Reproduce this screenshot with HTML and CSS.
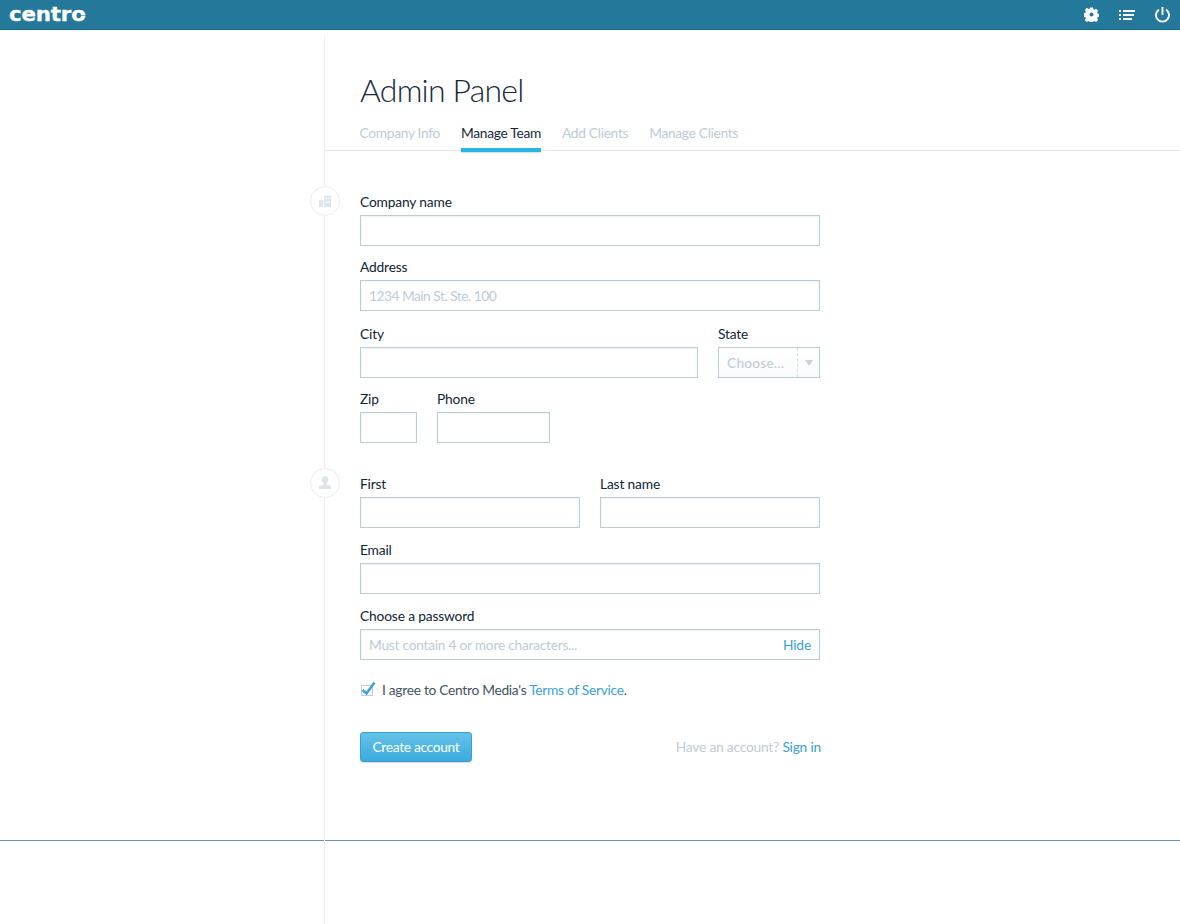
FILE: index.html
```html
<!DOCTYPE html>
<html lang="en">

<head>
    <meta charset="UTF-8" />
    <title>Admin Panel</title>
    <link rel="stylesheet" href="styles.css">
</head>

<body>

    <header class="topbar">
        <span class="logo">centro</span>
        <nav class="top-icons">
            <svg class="top-icon" width="15" height="15" viewBox="0 0 16 16">
                <path fill="#fff" fill-rule="evenodd" d="M6.400.5h3.200l.4 2 1.200.5 1.700-1.100 2.200 2.200-1.100 1.700.5 1.200 2 .4v3.200l-2 .4-.5 1.200 1.100 1.700-2.200 2.200-1.700-1.100-1.200.5-.4 2H6.400l-.4-2-1.200-.5-1.700 1.100-2.200-2.200 1.100-1.700-.5-1.200-2-.4V6.400l2-.4.5-1.200-1.100-1.700 2.200-2.200 1.700 1.100 1.200-.5zM8 5.800a2.200 2.200 0 1 0 0 4.400 2.200 2.200 0 0 0 0-4.400z" />
            </svg>
            <svg class="top-icon" width="16" height="12" viewBox="0 0 16 12">
                <path fill="#fff" d="M0 1h2v2H0zM4 1h12v2H4zM0 5h2v2H0zM4 5h11v2H4zM0 9h2v2H0zM4 9h9v2H4z" />
            </svg>
            <svg class="top-icon" width="15" height="16" viewBox="0 0 15 16">
                <path fill="none" stroke="#fff" stroke-width="1.900" d="M7.500 0v8M4 2.600a6.500 6.500 0 1 0 7 0" />
            </svg>
        </nav>
    </header>

    <main class="panel">
        <div class="panel-head">
            <h1>Admin Panel</h1>
            <ul class="tabs">
                <li>Company Info</li>
                <li class="active">Manage Team</li>
                <li>Add Clients</li>
                <li>Manage Clients</li>
            </ul>
        </div>

        <form class="signup">
            <section class="group">
                <span class="marker">
                    <svg width="12" height="12" viewBox="0 0 14 14">
                        <path fill="#dbe5ea" d="M0 6h5v8H0zM6 1h8v13H6z" />
                        <path fill="#fff" d="M8 3h1.500v2H8zM11 3h1.500v2H11zM8 7h1.500v2H8zM11 7h1.500v2H11z" />
                    </svg>
                </span>
                <div class="field">
                    <label for="company">Company name</label>
                    <input type="text" id="company" />
                </div>
                <div class="field wide-gap">
                    <label for="address">Address</label>
                    <input type="text" id="address" class="tight" placeholder="1234 Main St. Ste. 100" />
                </div>
                <div class="row">
                    <div class="field grow">
                        <label for="city">City</label>
                        <input type="text" id="city" />
                    </div>
                    <div class="field state">
                        <label>State</label>
                        <div class="select">
                            <span class="select-text">Choose...</span>
                            <span class="select-arrow"></span>
                        </div>
                    </div>
                </div>
                <div class="row">
                    <div class="field zip">
                        <label for="zip">Zip</label>
                        <input type="text" id="zip" />
                    </div>
                    <div class="field phone">
                        <label for="phone">Phone</label>
                        <input type="text" id="phone" />
                    </div>
                </div>
            </section>

            <section class="group group-user">
                <span class="marker">
                    <svg width="14" height="14" viewBox="0 0 14 14">
                        <path fill="#dbe5ea" d="M7 0c2 0 3.300 1.500 3.300 3.600 0 1.700-.8 3.100-1.700 3.800v1.200c2.500.6 4.400 1.500 4.400 2.600V13H1v-1.800c0-1.100 1.900-2 4.400-2.600V7.400c-.9-.7-1.700-2.100-1.700-3.800C3.700 1.500 5 0 7 0z" />
                    </svg>
                </span>
                <div class="row">
                    <div class="field half">
                        <label for="first">First</label>
                        <input type="text" id="first" />
                    </div>
                    <div class="field half">
                        <label for="last">Last name</label>
                        <input type="text" id="last" />
                    </div>
                </div>
                <div class="field mid-gap">
                    <label for="email">Email</label>
                    <input type="text" id="email" />
                </div>
                <div class="field">
                    <label for="password">Choose a password</label>
                    <div class="password">
                        <input type="text" id="password" placeholder="Must contain 4 or more characters..." />
                        <a href="#" class="hide-link">Hide</a>
                    </div>
                </div>
            </section>

            <div class="terms">
                <svg class="check" width="16" height="18" viewBox="0 0 16 18">
                    <rect x="1.500" y="6.500" width="11" height="10" fill="#fff" stroke="#bccdd5" />
                    <path fill="none" stroke="#3a9fd6" stroke-width="2.400" d="M2.500 11l4 3.500 8-11" />
                </svg>
                <span class="terms-text">I agree to Centro Media's <a href="#">Terms of Service</a>.</span>
            </div>

            <div class="actions">
                <button type="button">Create account</button>
                <span class="signin">Have an account? <a href="#">Sign in</a></span>
            </div>
        </form>
    </main>

    <hr class="foot-rule" />

</body>

</html>
```

FILE: styles.css
```css
html {
    height: 100%;
}

body {
    margin: 0;
    font-family: 'Lato', 'Open Sans', sans-serif;
    font-size: 13.75px;
    letter-spacing: -0.15px;
    color: #0f2433;
    background: #fff linear-gradient(#eceff1, #eceff1) no-repeat 324px 36px / 1px 100%;
}

a {
    color: #3a9fd6;
    text-decoration: none;
}

.topbar {
    height: 29px;
    display: flex;
    align-items: center;
    justify-content: space-between;
    padding: 0 10px 0 9px;
    background: #24789a;
    border-bottom: 1px solid #1c6582;
}

.logo {
    position: relative;
    font-family: 'DejaVu Sans', sans-serif;
    font-weight: bold;
    font-size: 20px;
    line-height: 29px;
    letter-spacing: -0.2px;
    color: #fff;
    -webkit-text-stroke: 0.3px #fff;
    transform: scaleX(1.07);
    transform-origin: left center;
}

/* slit through the last letter of the logo */
.logo::after {
    content: "";
    position: absolute;
    right: 0;
    top: 15px;
    width: 6px;
    height: 1px;
    background: rgba(36, 120, 154, 0.6);
}

.top-icons {
    display: flex;
    align-items: center;
    gap: 20px;
}

.top-icon {
    display: block;
}

.panel {
    margin-left: 325px;
}

.panel-head {
    height: 120px;
    border-bottom: 1px solid #e4e9ec;
}

h1 {
    margin: 0;
    padding: 40px 0 0 35px;
    height: 48px;
    font-size: 32px;
    line-height: 40px;
    letter-spacing: -0.8px;
    font-weight: 300;
    color: #15293a;
}

.tabs {
    display: flex;
    gap: 21px;
    margin: 3px 0 0 34.5px;
    padding: 0;
    list-style: none;
    letter-spacing: -0.3px;
    color: #bdcbd5;
}

.tabs li {
    height: 24px;
    line-height: 24px;
    white-space: nowrap;
}

.tabs .active {
    color: #15293a;
    height: 27px;
    border-bottom: 4px solid #27b5e2;
    box-shadow: 0 1px 1px rgba(0, 0, 0, 0.12);
}

.signup {
    width: 460px;
    margin-left: 35px;
    padding-top: 41px;
}

.group {
    position: relative;
}

.group-user {
    margin-top: 31px;
}

.marker {
    position: absolute;
    left: -50px;
    top: -6px;
    width: 28px;
    height: 28px;
    display: flex;
    align-items: center;
    justify-content: center;
    background: #fff;
    border: 1px solid #e8edf0;
    border-radius: 50%;
}

.field {
    margin-bottom: 11px;
}

.group .field:last-child,
.group .row:last-child .field {
    margin-bottom: 0;
}

.wide-gap {
    margin-bottom: 13px;
}

.mid-gap {
    margin-top: 1px;
    margin-bottom: 12px;
}

label {
    display: block;
    height: 20px;
    margin-bottom: 3px;
    line-height: 20px;
}

input[type="text"] {
    display: block;
    width: 100%;
    height: 31px;
    padding: 0 8px;
    box-sizing: border-box;
    border: 1px solid #bccbd2;
    border-radius: 0;
    outline: none;
    font: inherit;
    letter-spacing: -0.25px;
    color: inherit;
    box-shadow: inset 0 1px 2px rgba(188, 205, 213, 0.25);
}

input[type="text"].tight {
    letter-spacing: -0.5px;
}

input::placeholder {
    color: #bdcbd5;
    opacity: 1;
}

.row {
    display: flex;
    gap: 20px;
}

.grow {
    flex: 1;
}

.state {
    width: 102px;
}

.zip {
    width: 57px;
}

.phone {
    width: 113px;
}

.half {
    flex: 1;
}

.select {
    display: flex;
    height: 31px;
    box-sizing: border-box;
    border: 1px solid #bccbd2;
    background: linear-gradient(#fff, #f9fafb);
    color: #bdcbd5;
    line-height: 29px;
}

.select-text {
    width: 79px;
    padding-left: 8px;
    box-sizing: border-box;
    white-space: nowrap;
    letter-spacing: 0.2px;
    border-right: 1px dashed #d5dee3;
}

.select-arrow {
    width: 0;
    height: 0;
    margin: 12px 0 0 7px;
    border-left: 4.500px solid transparent;
    border-right: 4.500px solid transparent;
    border-top: 6px solid #c6d3db;
}

.password {
    position: relative;
}

.password input[type="text"] {
    padding-right: 50px;
}

.hide-link {
    position: absolute;
    right: 9px;
    top: 6px;
    line-height: 20px;
}

.terms {
    display: flex;
    align-items: center;
    gap: 6px;
    height: 20px;
    margin-top: 20px;
    letter-spacing: -0.28px;
    color: #3f5360;
}

.terms-text {
    padding-bottom: 2px;
}

.check {
    display: block;
    margin-top: -4px;
}

.actions {
    display: flex;
    align-items: center;
    justify-content: space-between;
    width: 461px;
    margin-top: 32px;
    height: 30px;
}

button {
    width: 112px;
    height: 30px;
    padding: 0 0 2px;
    border: 1px solid #3a9fcb;
    border-radius: 3px;
    background: linear-gradient(#65c3e8, #3aaade);
    box-shadow: 0 1px 1px rgba(0, 0, 0, 0.15);
    color: #fff;
    font: inherit;
    letter-spacing: -0.3px;
    cursor: pointer;
}

.signin {
    padding-bottom: 2px;
    letter-spacing: -0.2px;
    color: #bdcbd5;
}

.foot-rule {
    margin: 78px 0 0;
    height: 1px;
    border: none;
    background: linear-gradient(to right, #6d95a5 324px, #fff 324px, #fff 325px, #6d95a5 325px);
}
```
